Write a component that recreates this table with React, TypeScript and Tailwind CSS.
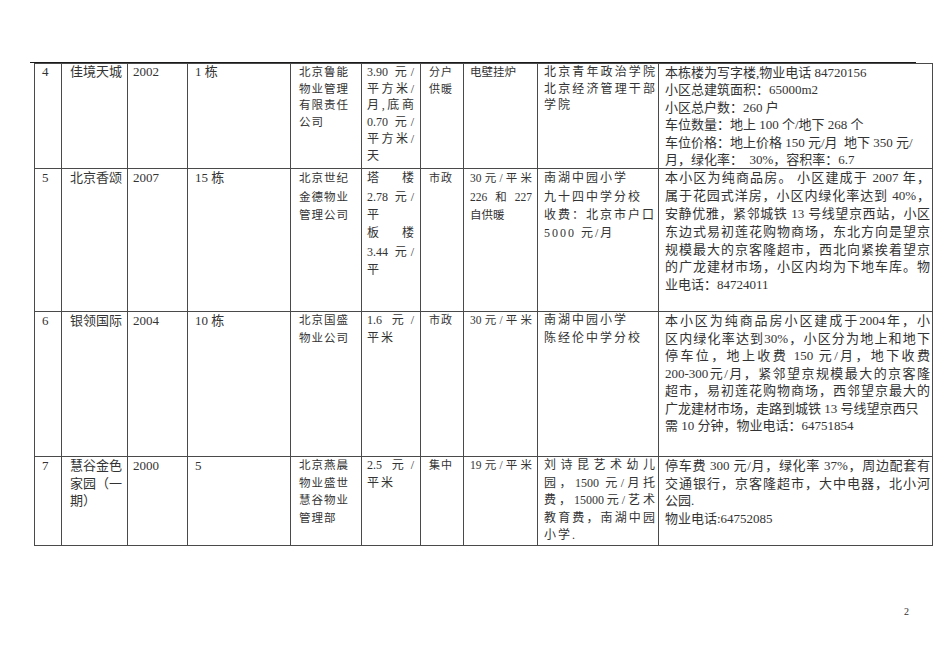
import React from "react";

type LineSpec = { t: string; j?: boolean };

const FONT = "font-['Liberation_Serif','Noto_Sans_CJK_SC',serif]";
const CELL = "border border-[#4a4a4a] p-0 align-top";

// plain lines keep their spaces and never wrap; justified ones fill the cell width
const Lines = ({ items, track = "" }: { items: LineSpec[]; track?: string }) => (
  <>
    {items.map((l, i) => (
      <div
        key={i}
        className={
          l.j
            ? "text-justify [text-align-last:justify]"
            : `whitespace-pre ${track}`
        }
      >
        {l.t}
      </div>
    ))}
  </>
);

// all lines but the last are justified
const just = (arr: string[]): LineSpec[] =>
  arr.map((t, i) => ({ t, j: i < arr.length - 1 }));
const plain = (arr: string[]): LineSpec[] => arr.map((t) => ({ t }));
const allJust = (arr: string[]): LineSpec[] => arr.map((t) => ({ t, j: true }));

type Row = {
  h: string;
  lead: string;
  lead10: string;
  no: string;
  name: string[];
  year: string;
  count: string;
  mgr: string[];
  fee: LineSpec[];
  heat: string[];
  gas: LineSpec[];
  school: LineSpec[];
  note: LineSpec[];
};

const rows: Row[] = [
  {
    h: "h-[105px]",
    lead: "leading-[16.7px]",
    lead10: "leading-[17.4px]",
    no: "4",
    name: ["佳境天城"],
    year: "2002",
    count: "1 栋",
    mgr: ["北京鲁能", "物业管理", "有限责任", "公司"],
    fee: just(["3.90 元/", "平方米/", "月,底商", "0.70 元/", "平方米/", "天"]),
    heat: ["分户", "供暖"],
    gas: plain(["电壁挂炉"]),
    school: just(["北京青年政治学院", "北京经济管理干部", "学院"]),
    note: plain([
      "本栋楼为写字楼,物业电话 84720156",
      "小区总建筑面积：65000m2",
      "小区总户数：260 户",
      "车位数量：地上 100 个/地下 268 个",
      "车位价格：地上价格 150 元/月  地下 350 元/",
      "月，绿化率：  30%，容积率：6.7",
    ]),
  },
  {
    h: "h-[143px]",
    lead: "leading-[18.3px]",
    lead10: "leading-[17.8px]",
    no: "5",
    name: ["北京香颂"],
    year: "2007",
    count: "15 栋",
    mgr: ["北京世纪", "金德物业", "管理公司"],
    fee: [
      { t: "塔楼", j: true },
      { t: "2.78 元/", j: true },
      { t: "平" },
      { t: "板楼", j: true },
      { t: "3.44 元/", j: true },
      { t: "平" },
    ],
    heat: ["市政"],
    gas: [{ t: "30元/平米", j: true }, { t: "226和227", j: true }, { t: "自供暖" }],
    school: plain(["南湖中园小学", "九十四中学分校", "收费：北京市户口", "5000 元/月"]),
    note: just([
      "本小区为纯商品房。 小区建成于 2007 年，",
      "属于花园式洋房，小区内绿化率达到 40%，",
      "安静优雅，紧邻城铁 13 号线望京西站，小区",
      "东边式易初莲花购物商场，东北方向是望京",
      "规模最大的京客隆超市，西北向紧挨着望京",
      "的广龙建材市场，小区内均为下地车库。物",
      "业电话：84724011",
    ]),
  },
  {
    h: "h-[145px]",
    lead: "leading-[17.5px]",
    lead10: "leading-[17.5px]",
    no: "6",
    name: ["银领国际"],
    year: "2004",
    count: "10 栋",
    mgr: ["北京国盛", "物业公司"],
    fee: just(["1.6 元/", "平米"]),
    heat: ["市政"],
    gas: allJust(["30元/平米"]),
    school: plain(["南湖中园小学", "陈经伦中学分校"]),
    note: [
      { t: "本小区为纯商品房小区建成于2004年，小", j: true },
      { t: "区内绿化率达到30%，小区分为地上和地下", j: true },
      { t: "停车位，地上收费 150 元/月，地下收费", j: true },
      { t: "200-300元/月，紧邻望京规模最大的京客隆", j: true },
      { t: "超市，易初莲花购物商场，西邻望京最大的", j: true },
      { t: "广龙建材市场，走路到城铁 13 号线望京西只" },
      { t: "需 10 分钟，物业电话：64751854" },
    ],
  },
  {
    h: "h-[89px]",
    lead: "leading-[17.5px]",
    lead10: "leading-[17.5px]",
    no: "7",
    name: ["慧谷金色", "家园（一", "期）"],
    year: "2000",
    count: "5",
    mgr: ["北京燕晨", "物业盛世", "慧谷物业", "管理部"],
    fee: just(["2.5 元/", "平米"]),
    heat: ["集中"],
    gas: allJust(["19元/平米"]),
    school: just([
      "刘诗昆艺术幼儿",
      "园，1500 元/月托",
      "费，15000元/艺术",
      "教育费，南湖中园",
      "小学.",
    ]),
    note: [
      { t: "停车费 300 元/月，绿化率 37%，周边配套有", j: true },
      { t: "交通银行，京客隆超市，大中电器，北小河", j: true },
      { t: "公园." },
      { t: "物业电话:64752085" },
    ],
  },
];

const App = () => {
  return (
    <div className={`min-h-[672px] w-[950px] bg-white pt-[62px] text-[#333] ${FONT}`}>
      <div className="ml-[30px] h-px w-[886px] bg-[#1a1a1a]" />
      <table className="ml-[34px] w-[898px] table-fixed border-collapse">
        <colgroup>
          <col className="w-[27px]" />
          <col className="w-[66px]" />
          <col className="w-[60px]" />
          <col className="w-[103px]" />
          <col className="w-[71px]" />
          <col className="w-[59px]" />
          <col className="w-[43px]" />
          <col className="w-[74px]" />
          <col className="w-[121px]" />
          <col className="w-[274px]" />
        </colgroup>
        <tbody>
          {rows.map((r) => (
            <tr key={r.no} className={r.h}>
              <td className={`${CELL} pl-[7px] text-[13px] ${r.lead}`}>{r.no}</td>
              <td className={`${CELL} pl-[8px] text-[13px] ${r.lead}`}>
                <Lines items={plain(r.name)} />
              </td>
              <td className={`${CELL} pl-[5px] text-[13px] ${r.lead}`}>{r.year}</td>
              <td className={`${CELL} pl-[7px] text-[13px] ${r.lead}`}>{r.count}</td>
              <td className={`${CELL} pl-[8px] text-[11.5px] tracking-[1px] ${r.lead}`}>
                <Lines items={plain(r.mgr)} />
              </td>
              <td className={`${CELL} pl-[5px] pr-[6px] text-[12px] ${r.lead}`}>
                <Lines items={r.fee} track="tracking-[2px]" />
              </td>
              <td className={`${CELL} pl-[8px] text-[11px] tracking-[1px] ${r.lead}`}>
                <Lines items={plain(r.heat)} />
              </td>
              <td className={`${CELL} pl-[6px] pr-[5px] text-[11.5px] ${r.lead}`}>
                <Lines items={r.gas} />
              </td>
              <td className={`${CELL} pl-[6px] pr-[3px] text-[12px] ${r.lead}`}>
                <Lines items={r.school} track="tracking-[2px]" />
              </td>
              <td className={`${CELL} pl-[6px] pr-[2px] text-[13px] ${r.lead10}`}>
                <Lines items={r.note} />
              </td>
            </tr>
          ))}
        </tbody>
      </table>
      <div className="mt-[60px] pl-[904px] text-[10px] leading-[12px]">2</div>
    </div>
  );
};

export default App;
